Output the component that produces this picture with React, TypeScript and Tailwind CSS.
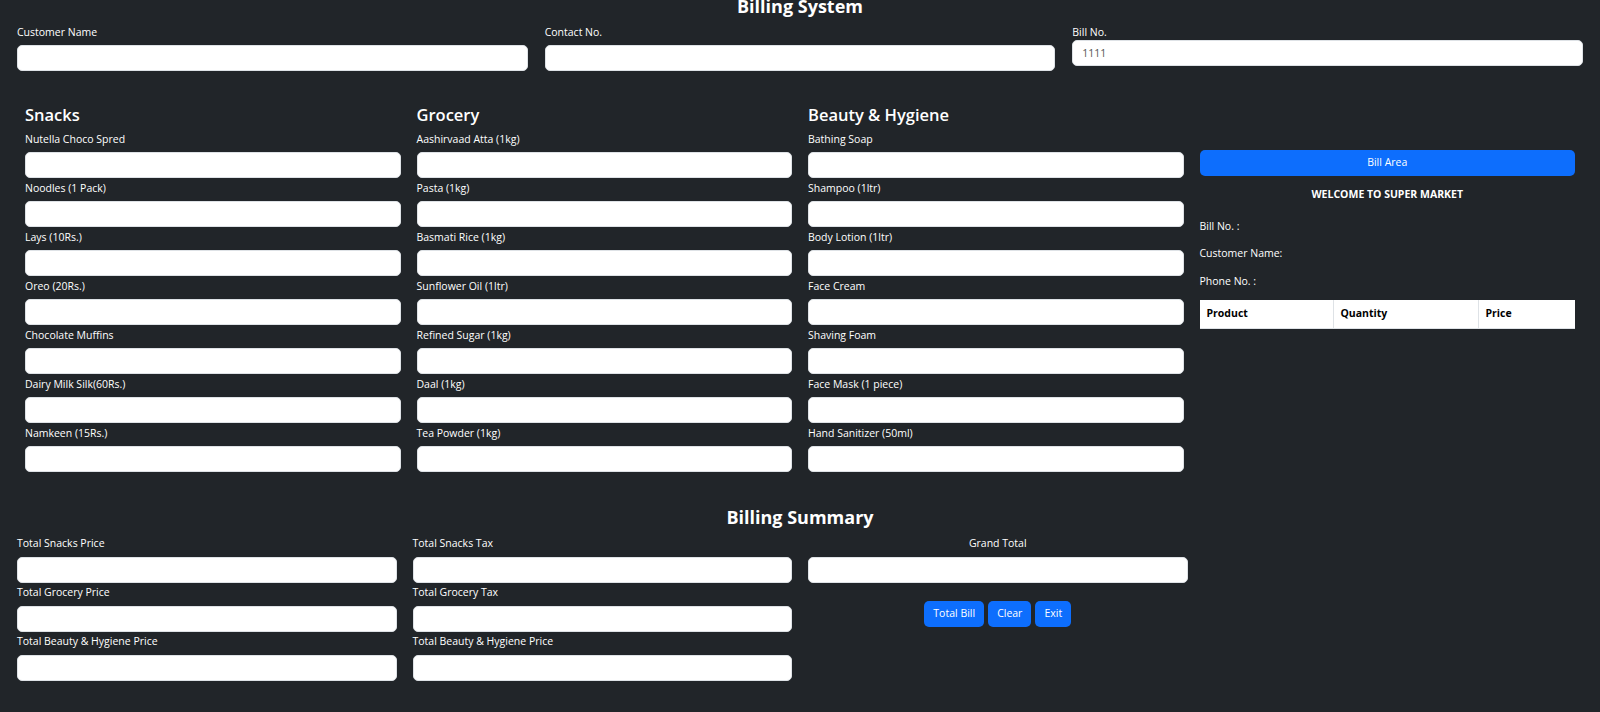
import React from "react";

const snacks = ["Nutella Choco Spred", "Noodles (1 Pack)", "Lays (10Rs.)", "Oreo (20Rs.)", "Chocolate Muffins", "Dairy Milk Silk(60Rs.)", "Namkeen (15Rs.)"];
const grocery = ["Aashirvaad Atta (1kg)", "Pasta (1kg)", "Basmati Rice (1kg)", "Sunflower Oil (1ltr)", "Refined Sugar (1kg)", "Daal (1kg)", "Tea Powder (1kg)"];
const beauty = ["Bathing Soap", "Shampoo (1ltr)", "Body Lotion (1ltr)", "Face Cream", "Shaving Foam", "Face Mask (1 piece)", "Hand Sanitizer (50ml)"];

function Input({ value }: { value?: string }) {
  return (
    <input
      readOnly
      value={value ?? ""}
      className="block w-full h-[26px] rounded-[5px] bg-white border border-[#dee2e6] px-[9px] text-[10.5px] text-[#555] outline-none"
    />
  );
}

function ProductCol({ title, items }: { title: string; items: string[] }) {
  return (
    <div>
      <div className="h-[24px] leading-[20px] text-[16.5px] font-semibold text-white">{title}</div>
      {items.map((it) => (
        <div key={it}>
          <div className="mt-[2px] h-[17px] leading-[17px] mb-[4px] text-[10.5px] text-white whitespace-nowrap">{it}</div>
          <Input />
        </div>
      ))}
    </div>
  );
}

function SumCol({ items }: { items: string[] }) {
  return (
    <div>
      {items.map((it, i) => (
        <div key={i}>
          <div className="mt-[1px] h-[16px] leading-[16px] mb-[6px] text-[10.5px] text-white whitespace-nowrap">{it}</div>
          <Input />
        </div>
      ))}
    </div>
  );
}

export default function App() {
  return (
    <div
      className="h-[712px] w-[1600px] overflow-hidden bg-[#212529] text-white"
      style={{ fontFamily: '"Open Sans", "Noto Sans", sans-serif' }}
    >
      <div className="-mt-[3px] h-[18px] leading-[18px] text-[18px] font-bold text-center">Billing System</div>

      <div className="grid grid-cols-3 gap-x-[17px] px-[17px] pt-[9px]">
        <div>
          <div className="h-[16px] leading-[16px] mb-[5px] text-[10.5px]">Customer Name</div>
          <Input />
        </div>
        <div>
          <div className="h-[16px] leading-[16px] mb-[5px] text-[10.5px]">Contact No.</div>
          <Input />
        </div>
        <div>
          <div className="h-[16px] leading-[16px] mb-0 text-[10.5px]">Bill No.</div>
          <Input value="1111" />
        </div>
      </div>

      <div className="grid grid-cols-4 gap-x-[16px] px-[25px] mt-[34px]">
        <ProductCol title="Snacks" items={snacks} />
        <ProductCol title="Grocery" items={grocery} />
        <ProductCol title="Beauty & Hygiene" items={beauty} />
        <div className="pt-[45px]">
          <div className="h-[26px] rounded-[5px] bg-[#0d6efd] flex items-center justify-center text-[10.5px] text-white">Bill Area</div>
          <div className="mt-[10px] h-[16px] leading-[16px] text-center text-[10.5px] font-bold">WELCOME TO SUPER MARKET</div>
          <div className="mt-[16px] h-[16px] leading-[16px] text-[10.5px]">Bill No. :</div>
          <div className="mt-[11px] h-[16px] leading-[16px] text-[10.5px]">Customer Name:</div>
          <div className="mt-[12px] h-[16px] leading-[16px] text-[10.5px]">Phone No. :</div>
          <div className="mt-[11px] grid grid-cols-[134px_145px_1fr] bg-white border-b border-[#dee2e6] h-[29px] text-[10.5px] font-bold text-black">
            <div className="flex items-center pl-[7px] border-r border-[#dee2e6]">Product</div>
            <div className="flex items-center pl-[7px] border-r border-[#dee2e6]">Quantity</div>
            <div className="flex items-center pl-[7px]">Price</div>
          </div>
        </div>
      </div>

      <div className="mt-[34px] h-[28px] leading-[22px] text-[18px] font-bold text-center">Billing Summary</div>
      <div className="grid grid-cols-4 gap-x-[16px] px-[17px]">
        <SumCol items={["Total Snacks Price", "Total Grocery Price", "Total Beauty & Hygiene Price"]} />
        <SumCol items={["Total Snacks Tax", "Total Grocery Tax", "Total Beauty & Hygiene Price"]} />
        <div>
          <div className="mt-[1px] h-[16px] leading-[16px] mb-[6px] text-[10.5px] text-center">Grand Total</div>
          <Input />
          <div className="mt-[18px] flex justify-center gap-[4px]">
            <button className="h-[26px] px-[9px] rounded-[5px] bg-[#0d6efd] text-[10.5px] text-white">Total Bill</button>
            <button className="h-[26px] px-[9px] rounded-[5px] bg-[#0d6efd] text-[10.5px] text-white">Clear</button>
            <button className="h-[26px] px-[9px] rounded-[5px] bg-[#0d6efd] text-[10.5px] text-white">Exit</button>
          </div>
        </div>
        <div />
      </div>
    </div>
  );
}
